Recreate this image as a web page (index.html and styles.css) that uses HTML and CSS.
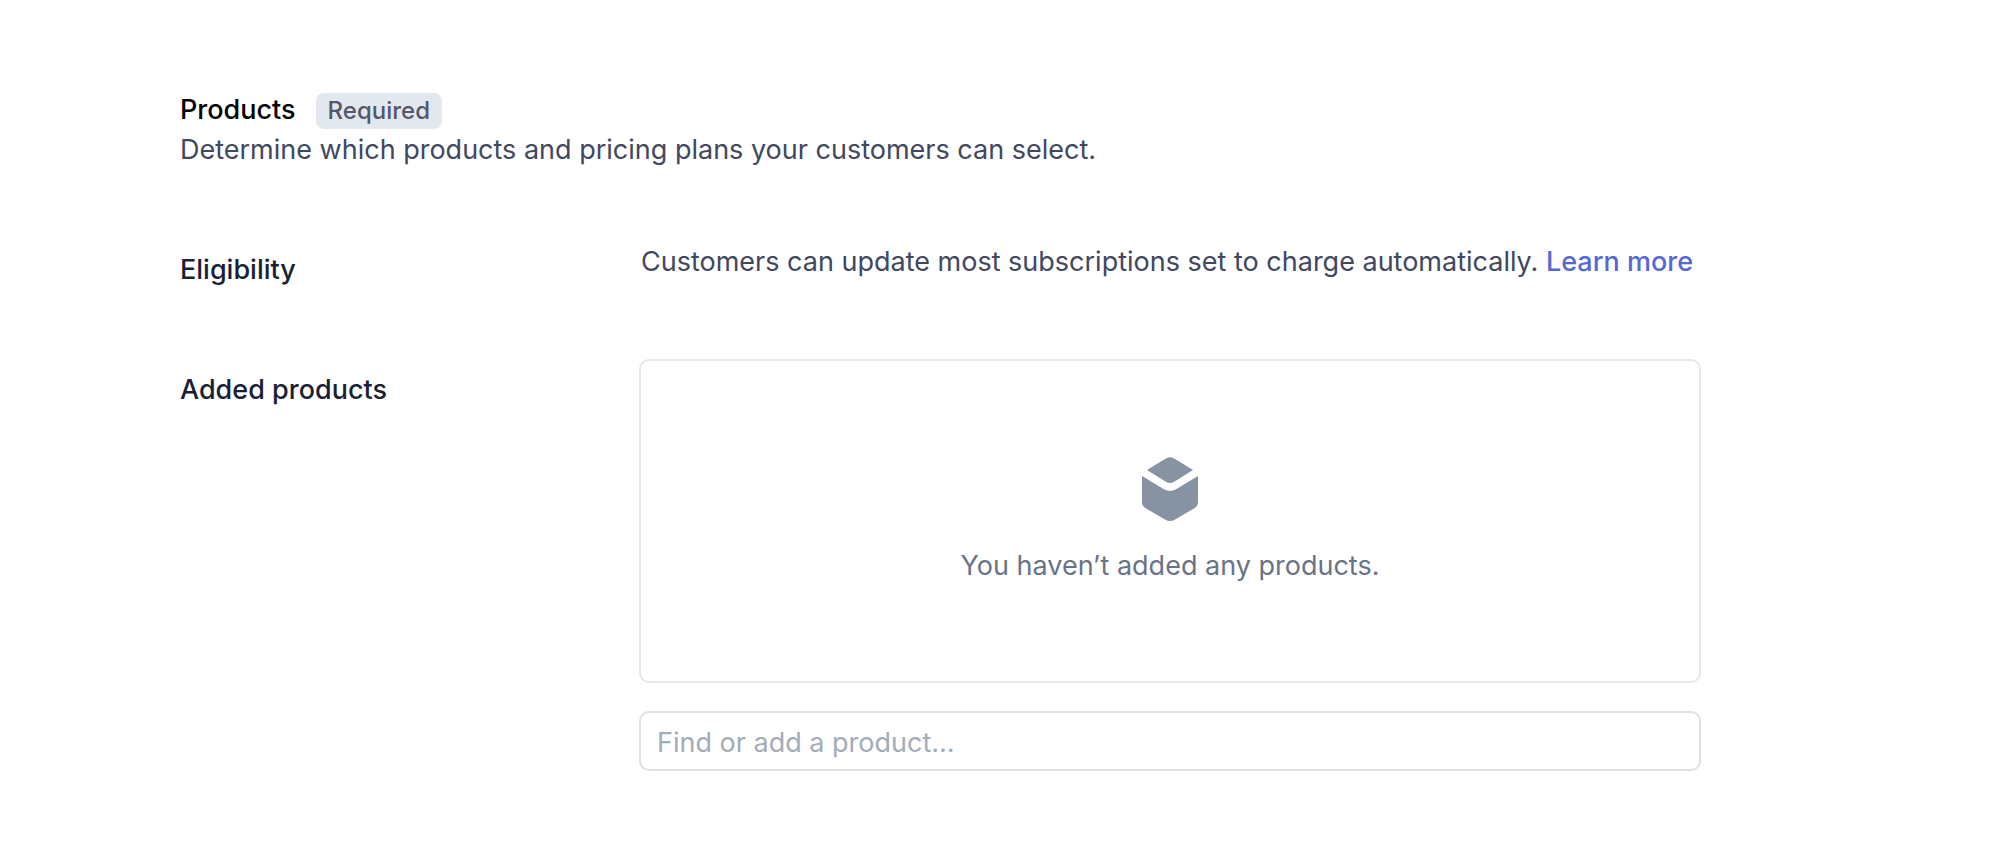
FILE: index.html
```html
<!DOCTYPE html>
<html lang="en">
<head>
<meta charset="UTF-8" />
<meta name="viewport" content="width=device-width, initial-scale=1" />
<title>Products</title>
<link rel="stylesheet" href="styles.css">
</head>
<body>

<main class="settings">
  <header class="section-header">
    <div class="title-row">
      <h1>Products</h1>
      <span class="badge">Required</span>
    </div>
    <p>Determine which products and pricing plans your customers can select.</p>
  </header>

  <section class="row">
    <h2>Eligibility</h2>
    <p class="eligibility">Customers can update most subscriptions set to charge automatically. <a href="#">Learn more</a></p>
  </section>

  <section class="row">
    <h2><label for="productSearch">Added products</label></h2>
    <div class="products">
      <div class="empty">
        <!-- Box icon -->
        <svg class="box-icon" xmlns="http://www.w3.org/2000/svg" viewBox="0 0 56 64" aria-hidden="true">
          <path d="M5 13 L23 2 Q28 -1.4 33 2 L51 13 L33 24.300 Q28 27.700 23 24.300 Z"/>
          <path d="M0 19 L22 32.300 Q28 35.700 34 32.300 L56 19 V45 Q56 49 52 51.500 L33 62.500 Q28 65.500 23 62.500 L4 51.500 Q0 49 0 45 Z"/>
        </svg>
        <p>You haven’t added any products.</p>
      </div>
      <input type="text" id="productSearch" placeholder="Find or add a product..." />
    </div>
  </section>
</main>

</body>
</html>
```

FILE: styles.css
```css
/* General styling */
* {
  box-sizing: border-box;
}

body {
  margin: 0;
  background: #fff;
  color: #414760;
  font-family: Inter, 'Liberation Sans', sans-serif;
  font-size: 27px;
  line-height: 40px;
}

h1, h2, p {
  margin: 0;
  font-size: 27px;
}

h1, h2 {
  font-weight: 500;
}

h1 {
  color: #000;
}

h2 {
  padding-top: 11px;
  color: #1a1f36;
}

.settings {
  padding: 90px 306px 80px 180px;
}

/* Header */
.title-row {
  display: flex;
  align-items: center;
  gap: 20px;
}

.badge {
  margin-top: 2px;
  padding: 0 12px;
  background: #e3e8ee;
  color: #545969;
  border-radius: 8px;
  font-size: 24px;
  font-weight: 500;
  line-height: 36px;
}

.section-header {
  margin-bottom: 69px;
}

/* Label on the left, content on the right */
.row {
  display: grid;
  grid-template-columns: 459px 1fr;
}

.row + .row {
  margin-top: 69px;
}

.eligibility {
  padding: 3px 0 0 2px;
  white-space: nowrap;
}

.eligibility a {
  color: #5469d4;
  font-weight: 500;
  text-decoration: none;
}

.products {
  display: flex;
  flex-direction: column;
  gap: 28px;
}

.empty {
  display: flex;
  flex-direction: column;
  align-items: center;
  gap: 25px;
  padding: 96px 24px 95px;
  border: 2px solid #e3e8ee;
  border-radius: 10px;
  color: #697386;
}

.box-icon {
  width: 56px;
  height: 64px;
  fill: #8792a2;
}

input {
  width: 100%;
  height: 60px;
  padding: 2px 16px 0;
  border: 2px solid #e0e0e6;
  border-radius: 10px;
  background: #fff;
  color: #414760;
  font: inherit;
}

input::placeholder {
  color: #a3acb9;
  opacity: 1;
}
```
